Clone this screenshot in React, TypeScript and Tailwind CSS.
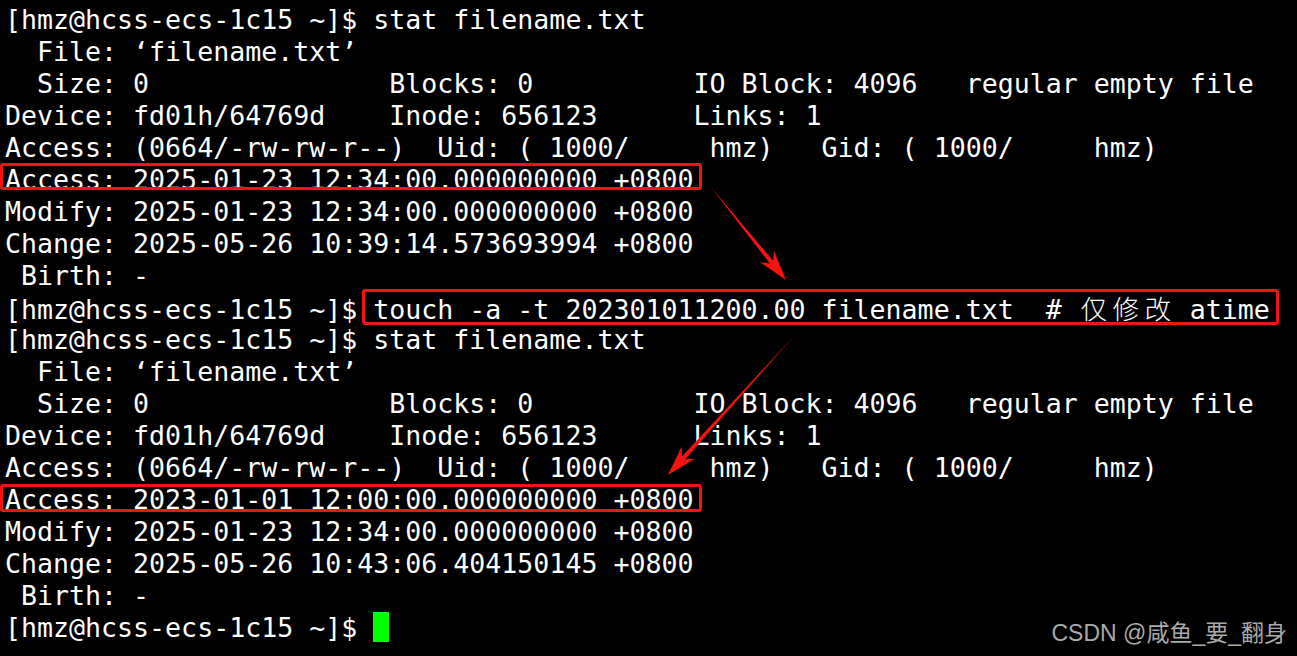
import React from "react";

const MONO = "font-['DejaVu_Sans_Mono','Liberation_Mono',monospace]";

type Box = { top: number; bottom: number; left: number; right: number };

// terminal line; optional red highlight box around the text part
function Line({ prompt, text, box, cursor }: { prompt?: boolean; text?: React.ReactNode; box?: Box; cursor?: boolean }) {
  return (
    <div className="h-[32px] leading-[32px] whitespace-pre">
      {prompt && <span>{"[hmz@hcss-ecs-1c15 ~]$ "}</span>}
      {box ? (
        <span className="relative">
          {text}
          <span
            className="absolute border-[3px] border-[#f5130f] rounded-[3px] pointer-events-none"
            style={{ top: box.top, bottom: box.bottom, left: box.left, right: box.right }}
          />
        </span>
      ) : (
        text
      )}
      {cursor && <span className="inline-block w-[16px] h-[30px] bg-[#00ff00] align-[-5px]" />}
    </div>
  );
}

function Cjk({ children }: { children: string }) {
  return (
    <span className="inline-block w-[32px] text-center font-['Noto_Sans_CJK_SC',sans-serif] font-light">
      {children}
    </span>
  );
}

function arrow(tx: number, ty: number, hx: number, hy: number) {
  const dx = hx - tx;
  const dy = hy - ty;
  const len = Math.hypot(dx, dy);
  const ux = dx / len;
  const uy = dy / len;
  const nx = -uy;
  const ny = ux;
  const p = (x: number, y: number) => `${x.toFixed(1)},${y.toFixed(1)}`;
  const bx = hx - 30 * ux;
  const by = hy - 30 * uy;
  const cx = hx - 21 * ux;
  const cy = hy - 21 * uy;
  const shaft = [p(tx, ty), p(cx + 2.2 * nx, cy + 2.2 * ny), p(cx - 2.2 * nx, cy - 2.2 * ny)].join(" ");
  const head = [p(hx, hy), p(bx + 9 * nx, by + 9 * ny), p(cx, cy), p(bx - 9 * nx, by - 9 * ny)].join(" ");
  return { shaft, head };
}

function Arrows() {
  const a1 = arrow(710, 186, 786, 280);
  const a2 = arrow(794, 336, 668, 475);
  return (
    <svg className="absolute inset-0 pointer-events-none" width="1297" height="656">
      {[a1, a2].map((a, i) => (
        <g key={i} fill="#f5130f">
          <polygon points={a.shaft} />
          <polygon points={a.head} />
        </g>
      ))}
    </svg>
  );
}

function Stat({ access, change, box }: { access: string; change: string; box: Box }) {
  return (
    <>
      <Line text={"  File: ‘filename.txt’"} />
      <Line text={"  Size: 0               Blocks: 0          IO Block: 4096   regular empty file"} />
      <Line text={"Device: fd01h/64769d    Inode: 656123      Links: 1"} />
      <Line text={"Access: (0664/-rw-rw-r--)  Uid: ( 1000/     hmz)   Gid: ( 1000/     hmz)"} />
      <Line text={"Access: " + access + " +0800"} box={box} />
      <Line text={"Modify: 2025-01-23 12:34:00.000000000 +0800"} />
      <Line text={"Change: " + change + " +0800"} />
      <Line text={" Birth: -"} />
    </>
  );
}

export default function App() {
  return (
    <div className={`relative w-[1297px] h-[656px] overflow-hidden bg-black text-white text-[26.6px] ${MONO}`}>
      <div className="pt-[4px] pl-[5px]">
        <Line prompt text="stat filename.txt" />
        <Stat
          access="2025-01-23 12:34:00.000000000"
          change="2025-05-26 10:39:14.573693994"
          box={{ top: -1, bottom: 5, left: -5, right: -9 }}
        />
        <Line
          prompt
          text={
            <>
              {"touch -a -t 202301011200.00 filename.txt  # "}
              <Cjk>仅</Cjk>
              <Cjk>修</Cjk>
              <Cjk>改</Cjk>
              {" atime"}
            </>
          }
          box={{ top: -5, bottom: 0, left: -11, right: -9 }}
        />
        <Line prompt text="stat filename.txt" />
        <Stat
          access="2023-01-01 12:00:00.000000000"
          change="2025-05-26 10:43:06.404150145"
          box={{ top: 0, bottom: 3, left: -5, right: -9 }}
        />
        <Line prompt cursor />
      </div>
      <Arrows />
      <div className="absolute top-[622px] right-[10px] leading-[23px] text-[23px] text-[#aaaaaa] whitespace-pre font-['Liberation_Sans','Noto_Sans_CJK_SC',sans-serif]">
        CSDN @咸鱼_要_翻身
      </div>
    </div>
  );
}
